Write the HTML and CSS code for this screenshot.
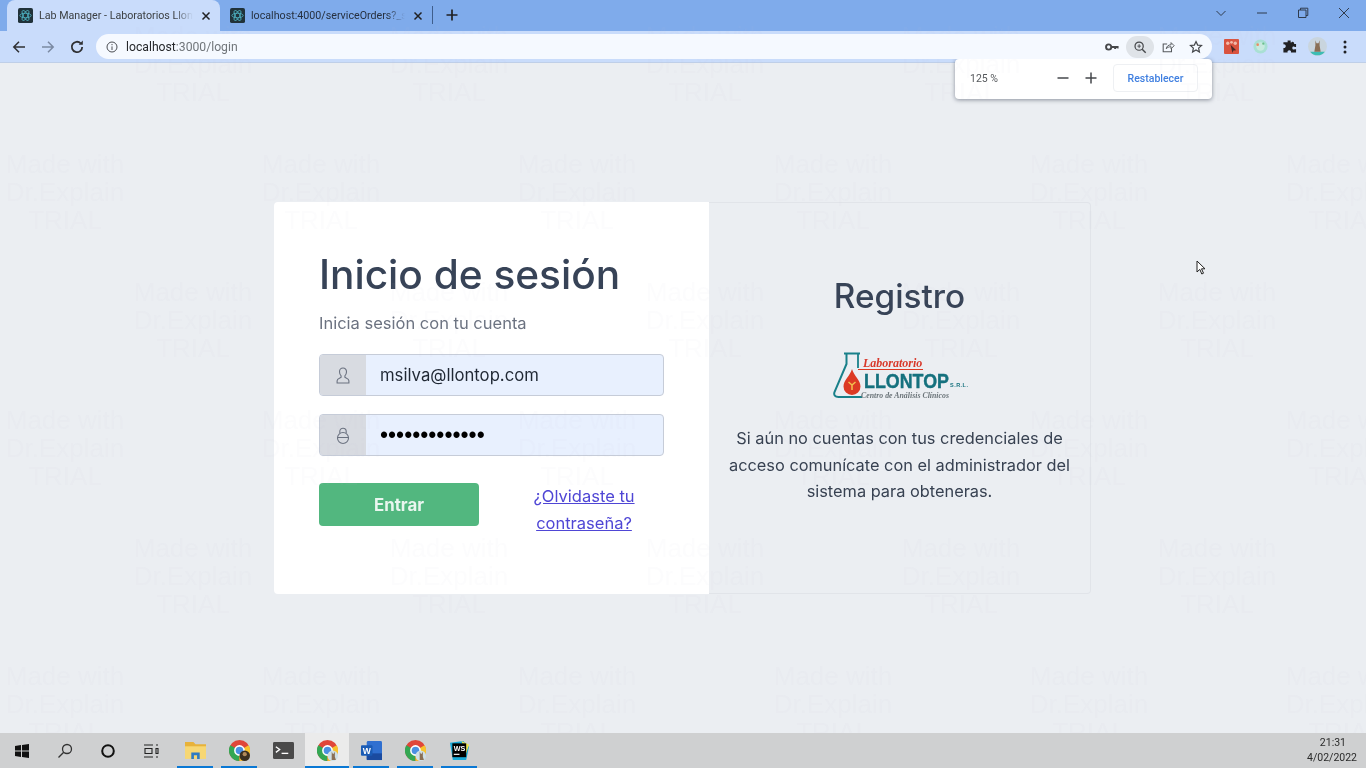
FILE: index.html
```html
<!DOCTYPE html>
<html lang="es">
<head>
<meta charset="utf-8">
<title>Lab Manager - Laboratorios Llontop</title>
<link rel="stylesheet" href="styles.css">
</head>
<body>
<div class="screen">
  <header class="tabstrip">
    <div class="tab tab-active">
      <svg class="favicon" viewBox="0 0 16 16"><rect width="16" height="16" rx="2" fill="#20323a"/><g fill="none" stroke="#4fb6c6" stroke-width=".9"><ellipse cx="8" cy="8" rx="6" ry="2.4"/><ellipse cx="8" cy="8" rx="6" ry="2.4" transform="rotate(60 8 8)"/><ellipse cx="8" cy="8" rx="6" ry="2.4" transform="rotate(120 8 8)"/></g></svg>
      <span class="tab-title">Lab Manager - Laboratorios Llontop</span>
      <svg class="tab-x" viewBox="0 0 10 10"><path d="M1.5 1.5l7 7M8.5 1.5l-7 7"/></svg>
    </div>
    <div class="tab tab-other">
      <svg class="favicon" viewBox="0 0 16 16"><rect width="16" height="16" rx="2" fill="#20323a"/><g fill="none" stroke="#4fb6c6" stroke-width=".9"><ellipse cx="8" cy="8" rx="6" ry="2.4"/><ellipse cx="8" cy="8" rx="6" ry="2.4" transform="rotate(60 8 8)"/><ellipse cx="8" cy="8" rx="6" ry="2.4" transform="rotate(120 8 8)"/></g></svg>
      <span class="tab-title">localhost:4000/serviceOrders?_sort=id</span>
      <svg class="tab-x" viewBox="0 0 10 10"><path d="M1.5 1.5l7 7M8.5 1.5l-7 7"/></svg>
    </div>
    <span class="tab-sep"></span>
    <svg class="new-tab" viewBox="0 0 12 12"><path d="M6 .5v11M.5 6h11"/></svg>
    <div class="win-controls">
      <svg class="win-ico" viewBox="0 0 12 12"><path d="M1.5 4l4.5 4.5L10.500 4"/></svg>
      <svg class="win-ico" viewBox="0 0 12 12"><path d="M1 6h10"/></svg>
      <svg class="win-ico" viewBox="0 0 12 12"><path d="M1.500 3h7.500v7.500H1.500zM3.500 3V1.200h7.300v7.300H9"/></svg>
      <svg class="win-ico" viewBox="0 0 12 12"><path d="M1 1l10 10M11 1L1 11"/></svg>
    </div>
  </header>

  <nav class="toolbar">
    <svg class="nav-ico" viewBox="0 0 16 16"><path d="M14 8H3M8 2.800L2.800 8 8 13.200" stroke="#2f3033"/></svg>
    <svg class="nav-ico" viewBox="0 0 16 16"><path d="M2 8h11M8 2.800L13.200 8 8 13.200" stroke="#7b8aa3"/></svg>
    <svg class="nav-ico" viewBox="0 0 16 16"><path d="M13.200 8a5.200 5.200 0 1 1-1.500-3.700" stroke="#2f3033" stroke-width="1.800"/><path d="M13.800 1.600v4.100H9.700z" fill="#2f3033" stroke="none"/></svg>
    <div class="omnibox">
      <svg class="omni-info" viewBox="0 0 12 12"><circle cx="6" cy="6" r="5"/><path d="M6 5.400V9M6 3v1.200"/></svg>
      <span class="url"><span class="url-host">localhost</span>:3000/login</span>
      <div class="omni-actions">
        <svg class="omni-ico" viewBox="0 0 16 16"><circle cx="4.200" cy="8" r="3" fill="none" stroke="#45474a" stroke-width="2.200"/><path d="M7 6.800h8.500v3h-1.500V9h-1.200v1.300H10.500V9H7z" fill="#45474a"/></svg>
        <span class="zoom-chip"><svg class="omni-ico" viewBox="0 0 16 16"><circle cx="7" cy="7" r="4.700" fill="none" stroke="#45474a" stroke-width="1.400"/><path d="M10.500 10.500L14.500 14.500" stroke="#45474a" stroke-width="1.600"/><path d="M7 4.800v4.400M5 7h4" stroke="#45474a"/></svg></span>
        <svg class="omni-ico" viewBox="0 0 16 16"><path d="M12 9.500V13.500H2.500V4.500H7" fill="none" stroke="#55585c" stroke-width="1.200"/><path d="M6 10c.5-3 2.500-4.500 5.500-4.500V3L15 6.500 11.500 10V7.700C9 7.700 7.300 8.500 6 10z" fill="none" stroke="#55585c" stroke-width="1.100"/></svg>
        <svg class="omni-ico" viewBox="0 0 16 16"><path d="M8 1.800l1.900 4 4.400.5-3.300 3 .9 4.400L8 11.500l-3.900 2.200.9-4.400-3.300-3 4.400-.5z" fill="none" stroke="#45474a" stroke-width="1.400"/></svg>
      </div>
    </div>
    <div class="extensions">
      <svg class="ext" viewBox="0 0 16 16"><rect width="16" height="16" rx="1" fill="#d9533f"/><circle cx="4" cy="4.500" r="1.800" fill="#f3b9a8"/><circle cx="8" cy="3.500" r="1.500" fill="#f3b9a8"/><circle cx="12" cy="4.500" r="1.800" fill="#f3b9a8"/><path d="M7 6l6 6-3 .3-1 2.700z" fill="#4a2a26"/></svg>
      <svg class="ext" viewBox="0 0 16 16"><circle cx="8" cy="8" r="7.500" fill="#a9e0d4"/><circle cx="8" cy="8" r="4.500" fill="#c8eadf"/><circle cx="5" cy="6" r="1.400" fill="#e98a63"/><circle cx="11" cy="5" r="1.200" fill="#6bbf8c"/></svg>
      <svg class="ext" viewBox="0 0 16 16"><path d="M6 1.500h3.200v2.300c1 .0 1.300-.8 2-.8 1 0 1.800 1 1.800 2.200H15v3.300h-1.500c-.8-.8-2.500-.5-2.500 1.200s1.700 2 2.500 1.200H15V14.500H9.500c.5-1-.2-2.500-1.700-2.500S5.500 13.500 6 14.500H1.500V9.500C2.500 10 4 9.300 4 7.700S2.500 5.300 1.500 5.800V3.500H6z" fill="#202124"/></svg>
      <svg class="ext ext-avatar" viewBox="0 0 18 18"><circle cx="9" cy="9" r="9" fill="#c9d5de"/><path d="M2 14h14a9 9 0 0 1-14 0z" fill="#3cbcb4"/><path d="M7 3l1 3h2l1-3v5l1 6H6l1-6z" fill="#8a6f55"/></svg>
      <svg class="ext ext-dots" viewBox="0 0 4 16"><circle cx="2" cy="3" r="1.500"/><circle cx="2" cy="8" r="1.500"/><circle cx="2" cy="13" r="1.500"/></svg>
    </div>
  </nav>

  <main class="page">
    <section class="card">
      <div class="panel-login">
        <h1 class="login-title">Inicio de sesión</h1>
        <p class="login-sub">Inicia sesión con tu cuenta</p>
        <div class="field">
          <span class="field-addon"><svg class="addon-ico" viewBox="0 0 16 18"><path d="M8 1.500c-2.200 0-3.500 1.600-3.500 3.800 0 1.900.8 3.300 1.600 4v1.500c-1 .8-4 1.200-4 3.500v2.200h11.800v-2.200c0-2.300-3-2.700-4-3.500V9.300c.8-.7 1.600-2.100 1.600-4 0-2.200-1.300-3.800-3.500-3.800z"/></svg></span>
          <span class="field-value">msilva@llontop.com</span>
        </div>
        <div class="field">
          <span class="field-addon"><svg class="addon-ico" viewBox="0 0 16 18"><rect x="2.500" y="6" width="11" height="11" rx="5.500"/><path d="M2.500 11h11M4.800 6.500V5a3.200 3.200 0 0 1 6.400 0v1.500"/></svg></span>
          <span class="field-value field-dots">•••••••••••••</span>
        </div>
        <div class="login-actions">
          <button class="btn-enter" type="button">Entrar</button>
          <a class="forgot" href="#">¿Olvidaste tu<br>contraseña?</a>
        </div>
      </div>
      <div class="panel-register">
        <h2 class="register-title">Registro</h2>
        <svg class="logo" viewBox="0 0 136 50">
          <path d="M11 1.500h16M13.500 2v10L1.500 40c-1 3 .5 5 4 5H29" fill="none" stroke="#19808a" stroke-width="2"/>
          <path d="M25 2v14" fill="none" stroke="#19808a" stroke-width="1.800"/>
          <path d="M19 17C21 24 27.500 28 27.500 34.500a8.500 8.500 0 0 1-17 0C10.500 28 17 24 19 17z" fill="#dc3a24"/>
          <path d="M15.500 30l3.500 3 3.500-3M19 33v5" fill="none" stroke="#f2c14e" stroke-width="1.500"/>
          <text class="logo-lab" x="30" y="15">Laboratorio</text>
          <path d="M25 17.500h65" stroke="#dc3a24" stroke-width="1"/>
          <text class="logo-name" x="31" y="36" textLength="85" lengthAdjust="spacingAndGlyphs">LLONTOP</text>
          <text class="logo-srl" x="117" y="35" textLength="18">S.R.L.</text>
          <text class="logo-sub" x="28" y="46" textLength="88">Centro de Análisis Clínicos</text>
        </svg>
        <p class="register-text">Si aún no cuentas con tus credenciales de acceso comunícate con el administrador del sistema para obteneras.</p>
      </div>
    </section>
  </main>

  <footer class="taskbar">
    <span class="task task-sys"><svg class="task-ico" viewBox="0 0 16 16"><path d="M1 3l6-.9V7.500H1zM8 2l7-1v6.500H8zM1 8.500h6v5.400L1 13zM8 8.500h7V15l-7-1z" fill="#111"/></svg></span>
    <span class="task task-sys"><svg class="task-ico" viewBox="0 0 16 16"><circle cx="10" cy="6" r="4.500" fill="none" stroke="#333" stroke-width="1.300"/><path d="M6.700 9.300L1.500 14.500" stroke="#333" stroke-width="1.300"/></svg></span>
    <span class="task task-sys"><svg class="task-ico" viewBox="0 0 16 16"><circle cx="8" cy="8" r="5.800" fill="none" stroke="#111" stroke-width="2"/></svg></span>
    <span class="task task-sys"><svg class="task-ico" viewBox="0 0 16 16"><path d="M1 2h9M1 14h9M2 5.500h7v5H2zM13 2h2M13 14h2M13 5.500h2v5h-2z" fill="none" stroke="#222" stroke-width="1.100"/></svg></span>
    <span class="task task-open task-first"><svg class="task-app" viewBox="0 0 20 20"><path d="M0 2h8l2 2h10v3H0z" fill="#e8b23a"/><path d="M0 6h20v12H0z" fill="#f7d774"/><path d="M6 18v-6h8v6h-2.500v-3.500h-3V18z" fill="#2e7bc4"/></svg></span>
    <span class="task task-open"><svg class="task-app" viewBox="0 0 20 20"><use href="#chrome"/><circle cx="15" cy="15" r="5" fill="#3a3020"/><circle cx="15" cy="13.500" r="2" fill="#b08a5a"/></svg></span>
    <span class="task task-plain"><svg class="task-app" viewBox="0 0 22 18"><rect width="22" height="18" rx="1.500" fill="#4a4a4a"/><path d="M3 5l4 3-4 3" fill="none" stroke="#fff" stroke-width="1.400"/><path d="M9 12h7" stroke="#fff" stroke-width="1.400"/></svg></span>
    <span class="task task-open task-active"><svg class="task-app" viewBox="0 0 20 20"><use href="#chrome"/><circle cx="15" cy="15" r="5" fill="#cfe0e6"/><path d="M14 11l1 2h1l1-2v5l1 3h-4l0-3z" fill="#8a6f55"/></svg></span>
    <span class="task task-open"><svg class="task-app" viewBox="0 0 22 20"><rect x="6" y="0" width="16" height="20" rx="1.500" fill="#2f6fd0"/><path d="M6 13h16v7H6z" fill="#1b4ba0"/><rect x="0" y="4.500" width="12" height="11" rx="1" fill="#1a5bb5"/><text class="task-w" x="6" y="13.300">W</text></svg></span>
    <span class="task task-open"><svg class="task-app" viewBox="0 0 20 20"><use href="#chrome"/><circle cx="15" cy="15" r="5" fill="#cfe0e6"/><path d="M14 11l1 2h1l1-2v5l1 3h-4l0-3z" fill="#8a6f55"/></svg></span>
    <span class="task task-open"><svg class="task-app" viewBox="0 0 22 22"><path d="M1 3l14-2 6 6-3 14-14 0z" fill="#17a9d8"/><path d="M13 1l8 4-3 9z" fill="#f0e44a"/><rect x="3.500" y="3.500" width="14.500" height="14.500" fill="#000"/><text class="task-ws" x="5" y="11.500">WS</text><path d="M5 15h6" stroke="#fff" stroke-width="1.200"/></svg></span>
    <div class="clock"><span>21:31</span><span>4/02/2022</span></div>
  </footer>

  <svg class="defs" width="0" height="0"><defs>
    <g id="chrome"><circle cx="10" cy="10" r="10" fill="#e0463a"/><path d="M10 10L1.300 5A10 10 0 0 0 10 20z" fill="#34a753"/><path d="M10 10l8.700-5A10 10 0 0 1 10 20z" fill="#f7c32e"/><circle cx="10" cy="10" r="4.400" fill="#4a90e2" stroke="#fff" stroke-width="1.500"/></g>
  </defs></svg>

  <div class="zoom-popup">
    <span class="zoom-value">125 %</span>
    <svg class="zoom-btn" viewBox="0 0 12 12"><path d="M.5 6h11"/></svg>
    <svg class="zoom-btn" viewBox="0 0 12 12"><path d="M.5 6h11M6 .5v11"/></svg>
    <span class="zoom-reset">Restablecer</span>
  </div>

  <svg class="cursor" viewBox="0 0 10 15"><path d="M1 1v11l2.800-2.600L5.800 14l1.700-.8-2-4.400H9z" fill="#fff" stroke="#222" stroke-width="1"/></svg>

  <div class="watermark">
    <div class="wm-row wm-odd"><span>Made with<br>Dr.Explain<br>TRIAL</span><span>Made with<br>Dr.Explain<br>TRIAL</span><span>Made with<br>Dr.Explain<br>TRIAL</span><span>Made with<br>Dr.Explain<br>TRIAL</span><span>Made with<br>Dr.Explain<br>TRIAL</span></div>
    <div class="wm-row"><span>Made with<br>Dr.Explain<br>TRIAL</span><span>Made with<br>Dr.Explain<br>TRIAL</span><span>Made with<br>Dr.Explain<br>TRIAL</span><span>Made with<br>Dr.Explain<br>TRIAL</span><span>Made with<br>Dr.Explain<br>TRIAL</span><span>Made with<br>Dr.Explain<br>TRIAL</span></div>
    <div class="wm-row wm-odd"><span>Made with<br>Dr.Explain<br>TRIAL</span><span>Made with<br>Dr.Explain<br>TRIAL</span><span>Made with<br>Dr.Explain<br>TRIAL</span><span>Made with<br>Dr.Explain<br>TRIAL</span><span>Made with<br>Dr.Explain<br>TRIAL</span></div>
    <div class="wm-row"><span>Made with<br>Dr.Explain<br>TRIAL</span><span>Made with<br>Dr.Explain<br>TRIAL</span><span>Made with<br>Dr.Explain<br>TRIAL</span><span>Made with<br>Dr.Explain<br>TRIAL</span><span>Made with<br>Dr.Explain<br>TRIAL</span><span>Made with<br>Dr.Explain<br>TRIAL</span></div>
    <div class="wm-row wm-odd"><span>Made with<br>Dr.Explain<br>TRIAL</span><span>Made with<br>Dr.Explain<br>TRIAL</span><span>Made with<br>Dr.Explain<br>TRIAL</span><span>Made with<br>Dr.Explain<br>TRIAL</span><span>Made with<br>Dr.Explain<br>TRIAL</span></div>
    <div class="wm-row"><span>Made with<br>Dr.Explain<br>TRIAL</span><span>Made with<br>Dr.Explain<br>TRIAL</span><span>Made with<br>Dr.Explain<br>TRIAL</span><span>Made with<br>Dr.Explain<br>TRIAL</span><span>Made with<br>Dr.Explain<br>TRIAL</span><span>Made with<br>Dr.Explain<br>TRIAL</span></div>
  </div>
</div>
</body>
</html>
```

FILE: styles.css
```css
* { box-sizing: border-box; }
html, body { margin: 0; padding: 0; height: 100%; overflow: hidden; }
body { font-family: Inter, "Liberation Sans", sans-serif; background: #ebeef2; }

.screen {
  position: relative;
  width: 1366px;
  height: 768px;
  display: flex;
  flex-direction: column;
  overflow: hidden;
  filter: blur(0.45px);
}

/* Tab strip */
.tabstrip {
  height: 31px;
  flex: none;
  display: flex;
  align-items: stretch;
  padding-left: 7px;
  background: #7fabeb;
}
.tab {
  display: flex;
  align-items: center;
  width: 213px;
  padding: 0 9px 0 11px;
  font: 10.700px "Roboto", "Liberation Sans", sans-serif;
  color: #3c4043;
}
.tab-active { background: #c9dcfb; border-radius: 8px 8px 0 0; }
.tab-other { width: 212px; margin-left: 1px; color: #26303f; padding: 0 10px 0 9px; }
.favicon { width: 15px; height: 15px; flex: none; margin-right: 6px; }
.tab-title {
  flex: 1;
  min-width: 0;
  white-space: nowrap;
  overflow: hidden;
  -webkit-mask-image: linear-gradient(90deg, #000 88%, transparent);
  mask-image: linear-gradient(90deg, #000 88%, transparent);
}
.tab-x { width: 10px; height: 10px; flex: none; margin-left: 8px; fill: none; stroke: #202124; stroke-width: 1.500; }
.tab-sep { width: 1px; height: 18px; margin: 6px 0 0 -1px; background: #3f5e8c; }
.new-tab { width: 12px; height: 12px; margin: 9px 0 0 13px; fill: none; stroke: #202124; stroke-width: 1.700; }
.win-controls { margin-left: auto; display: flex; align-items: center; gap: 29px; padding: 0 16px 5px 0; }
.win-ico { width: 12px; height: 12px; fill: none; stroke: #2f3b4d; stroke-width: 1; }

/* Toolbar */
.toolbar {
  height: 32px;
  flex: none;
  display: flex;
  align-items: center;
  padding: 0 0 0 11px;
  background: #c9dcfb;
  border-bottom: 1px solid #bfcfe8;
}
.nav-ico { width: 16px; height: 16px; flex: none; margin-right: 13px; fill: none; stroke-width: 1.500; }
.omnibox {
  width: 1116px;
  height: 25px;
  margin-left: -2px;
  display: flex;
  align-items: center;
  padding: 0 9px 0 10px;
  background: #f5f9ff;
  border-radius: 13px;
  position: relative;
  z-index: 1;
}
.omni-info { width: 12px; height: 12px; flex: none; fill: none; stroke: #4a4d52; stroke-width: 1; margin-right: 8px; }
.url { font: 12.200px "Roboto", "Liberation Sans", sans-serif; color: #70757a; }
.url-host { color: #26282b; }
.omni-actions { margin-left: auto; display: flex; align-items: center; gap: 14px; }
.omni-ico { width: 14px; height: 14px; display: block; flex: none; }
.zoom-chip { width: 28px; height: 22px; margin: 0 -7px; display: flex; align-items: center; justify-content: center; background: #dfe3e8; border-radius: 11px; }
.extensions { display: flex; align-items: center; margin-left: 12px; gap: 14px; }
.ext { width: 15px; height: 15px; flex: none; }
.ext-avatar { width: 19px; height: 19px; margin-left: -3px; }
.ext-dots { width: 4px; height: 16px; margin-left: 2px; fill: #202124; }

/* Page */
.page {
  flex: 1;
  min-height: 0;
  display: flex;
  align-items: center;
  justify-content: center;
  padding-right: 1px;
  background: #ebeef2;
}
.card {
  width: 817px;
  height: 392px;
  display: flex;
  border-radius: 4px;
}
.panel-login {
  width: 435px;
  flex: none;
  padding: 45px 45px 0;
  background: #fff;
  border-radius: 4px 0 0 4px;
}
.login-title {
  margin: 0;
  font-size: 40.600px;
  line-height: 56px;
  font-weight: 500;
  color: #374357;
}
.login-sub {
  margin: 8px 0 19px;
  font-size: 16.500px;
  line-height: 24px;
  color: #6b7280;
}
.field {
  height: 42px;
  display: flex;
  margin-bottom: 18px;
  border: 1px solid #c6ccd8;
  border-radius: 4px;
  overflow: hidden;
  background: #e8f0fe;
}
.field-addon {
  width: 46px;
  flex: none;
  display: flex;
  align-items: center;
  justify-content: center;
  background: #d8dbe1;
}
.addon-ico { width: 16px; height: 19px; fill: none; stroke: #6b7280; stroke-width: 1.100; }
.field-value {
  display: flex;
  align-items: center;
  padding-left: 14px;
  font-size: 16.700px;
  color: #1f2733;
}
.field-dots { font-size: 23px; color: #000; font-family: "Liberation Sans", sans-serif; }
.login-actions { display: flex; align-items: flex-start; margin-top: 27px; }
.btn-enter {
  width: 160px;
  height: 43px;
  border: 0;
  border-radius: 4px;
  background: #52b77f;
  color: #e9f6ef;
  font: 700 16.800px Inter, "Liberation Sans", sans-serif;
}
.forgot {
  margin: 0 0 0 51px;
  width: 108px;
  text-align: center;
  font-size: 16.500px;
  line-height: 27px;
  color: #4f46d5;
  text-decoration: underline;
  white-space: nowrap;
}

.panel-register {
  flex: 1;
  display: flex;
  flex-direction: column;
  align-items: center;
  padding: 70px 18px 0;
  border: 1px solid #e1e4e9;
  border-left: 0;
  border-radius: 0 4px 4px 0;
}
.register-title {
  margin: 0;
  font-size: 33.300px;
  line-height: 46px;
  font-weight: 500;
  color: #374357;
}
.logo { width: 136px; height: 50px; margin: 33px 0 0 2px; display: block; }
.logo-lab { font: italic 700 12px "Liberation Serif", serif; fill: #d8382a; }
.logo-name { font: 700 19.500px "Liberation Sans", sans-serif; fill: #15717e; stroke: #15717e; stroke-width: .4; }
.logo-srl { font: 700 5.500px "Liberation Sans", sans-serif; fill: #15717e; }
.logo-sub { font: italic 700 7.800px "Liberation Serif", serif; fill: #6b7479; }
.register-text {
  margin: 23px 0 0;
  font-size: 16.350px;
  line-height: 26.700px;
  text-align: center;
  color: #374151;
}

/* Taskbar */
.taskbar {
  height: 35px;
  flex: none;
  display: flex;
  align-items: stretch;
  background: #cfd0d1;
}
.task { width: 44px; display: flex; align-items: center; justify-content: center; position: relative; }
.task-sys { width: 43px; }
.task-first { margin-left: 1px; }
.task-active { background: #ebebeb; }
.task-open::after {
  content: "";
  position: absolute;
  left: 4px;
  right: 4px;
  bottom: 0;
  height: 2px;
  background: #0a78d4;
}
.task-active::after { left: 0; right: 0; }
.task-ico { width: 16px; height: 16px; }
.task-app { width: 21px; height: 21px; }
.task-w { font: 700 9px "Liberation Sans", sans-serif; fill: #fff; text-anchor: middle; }
.task-ws { font: 700 7.500px "Liberation Sans", sans-serif; fill: #fff; }
.clock {
  margin-left: auto;
  padding: 3px 9px 0 0;
  display: flex;
  flex-direction: column;
  align-items: flex-end;
  gap: 1px;
  font: 10.500px/14px "Roboto", "Liberation Sans", sans-serif;
  color: #2a2a2a;
  text-align: center;
}
.clock span:first-child { margin-right: 11px; }

.defs { position: absolute; }

/* Overlays */
.zoom-popup {
  position: absolute;
  left: 955px;
  top: 59px;
  width: 257px;
  height: 40px;
  display: flex;
  align-items: center;
  padding: 0 0 2px 15px;
  background: #fff;
  border-radius: 4px;
  box-shadow: 0 1px 4px rgba(40, 50, 70, .5);
  font-family: "Roboto", "Liberation Sans", sans-serif;
}
.zoom-value { width: 87px; font-size: 10.500px; color: #55585c; }
.zoom-btn { width: 12px; height: 12px; margin-right: 16px; fill: none; stroke: #44474b; stroke-width: 1.500; }
.zoom-reset {
  width: 85px;
  height: 28px;
  display: flex;
  align-items: center;
  justify-content: center;
  border: 1px solid #eef0f3;
  border-radius: 4px;
  font-size: 10.500px;
  font-weight: 500;
  color: #3f7fe0;
}
.cursor { position: absolute; left: 1196px; top: 260px; width: 10px; height: 15px; }

.watermark {
  position: absolute;
  left: 0;
  top: 22px;
  width: 1366px;
  height: 711px;
  overflow: hidden;
  pointer-events: none;
  display: flex;
  flex-direction: column;
  gap: 44px;
}
.wm-row { display: flex; flex: none; gap: 136px; height: 84px; margin-left: 5px; }
.wm-odd { margin-left: 133px; }
.wm-row span {
  width: 120px;
  flex: none;
  text-align: center;
  font: 26px/28px "Liberation Sans", sans-serif;
  color: rgba(200, 190, 225, .05);
  white-space: nowrap;
}
```
